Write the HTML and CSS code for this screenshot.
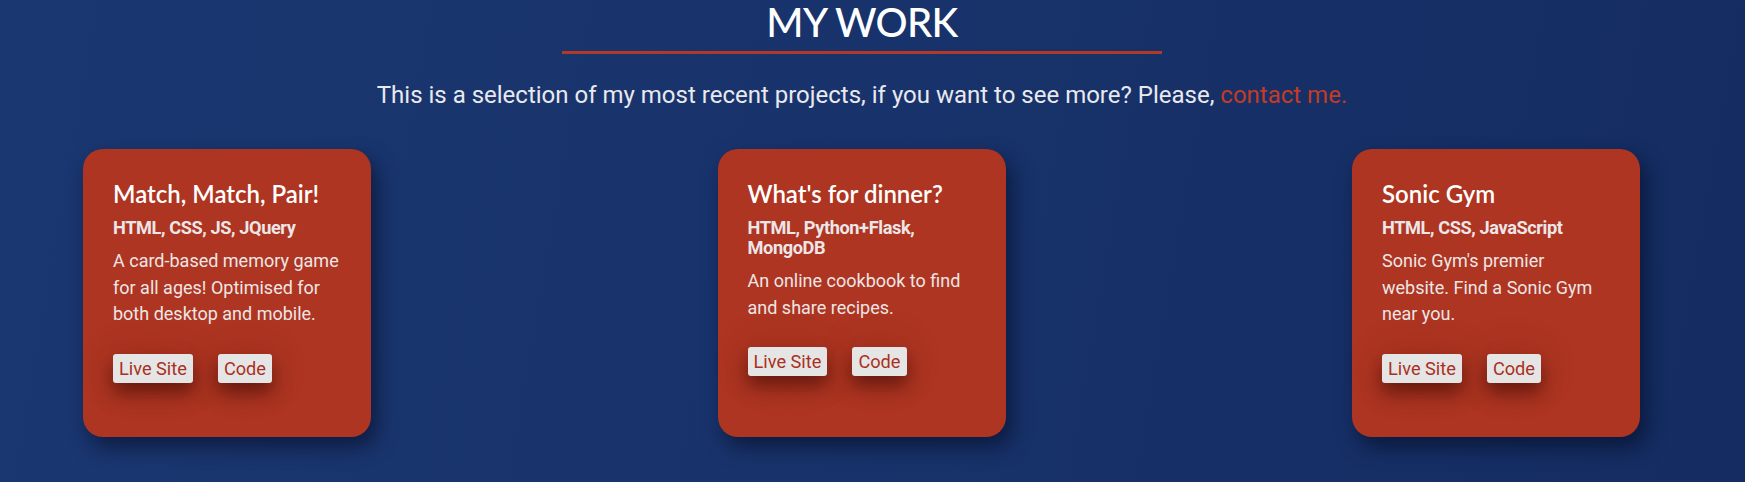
FILE: index.html
```html
<!DOCTYPE html>
<html lang="en">
<head>
<meta charset="utf-8">
<title>My Work</title>
<link rel="stylesheet" href="styles.css">
</head>
<body>
<section class="work">
  <div class="heading">
    <h2 class="heading-title">MY WORK</h2>
    <div class="heading-rule"></div>
  </div>
  <p class="intro">This is a selection of my most recent projects, if you want to see more? Please, <a class="intro-link" href="#">contact me.</a></p>
  <div class="cards">
    <article class="card">
      <h3 class="card-title">Match, Match, Pair!</h3>
      <p class="card-tech">HTML, CSS, JS, JQuery</p>
      <p class="card-desc">A card-based memory game for all ages! Optimised for both desktop and mobile.</p>
      <div class="card-actions">
        <a class="btn" href="#">Live Site</a>
        <a class="btn" href="#">Code</a>
      </div>
    </article>
    <article class="card">
      <h3 class="card-title">What's for dinner?</h3>
      <p class="card-tech">HTML, Python+Flask, MongoDB</p>
      <p class="card-desc">An online cookbook to find and share recipes.</p>
      <div class="card-actions">
        <a class="btn" href="#">Live Site</a>
        <a class="btn" href="#">Code</a>
      </div>
    </article>
    <article class="card">
      <h3 class="card-title">Sonic Gym</h3>
      <p class="card-tech">HTML, CSS, JavaScript</p>
      <p class="card-desc">Sonic Gym's premier website. Find a Sonic Gym near you.</p>
      <div class="card-actions">
        <a class="btn" href="#">Live Site</a>
        <a class="btn" href="#">Code</a>
      </div>
    </article>
  </div>
</section>
</body>
</html>
```

FILE: styles.css
```css
* { box-sizing: border-box; }

html, body {
  margin: 0;
  padding: 0;
  height: 100%;
}

body {
  background: linear-gradient(100deg, #1b3771 0%, #18336b 50%, #142c61 100%);
  font-family: Roboto, "Liberation Sans", sans-serif;
  color: #ecebf0;
  overflow: hidden;
}

.work {
  padding-right: 21px;
}

.heading {
  display: flex;
  flex-direction: column;
  align-items: center;
}

.heading-title {
  margin: 0;
  font-family: Lato, "Open Sans", sans-serif;
  font-weight: 500;
  font-size: 40px;
  line-height: 44px;
  letter-spacing: -0.6px;
  color: #ffffff;
}

.heading-rule {
  width: 600px;
  height: 3px;
  margin-top: 7px;
  background: #b13a26;
}

.intro {
  margin: 25px 0 0;
  text-align: center;
  font-size: 24px;
  line-height: 32px;
  color: #e9e9ef;
}

.intro-link {
  color: #c23b27;
  text-decoration: none;
}

.cards {
  display: flex;
  justify-content: space-between;
  padding: 0 84px 0 83px;
  margin-top: 38px;
}

.card {
  width: 288px;
  height: 288px;
  padding: 30px 30px;
  background: #ad3521;
  border-radius: 20px;
  box-shadow: 6px 10px 20px rgba(5, 12, 35, 0.6);
}

.card-title {
  margin: 0;
  font-family: Lato, "Open Sans", sans-serif;
  font-weight: 600;
  font-size: 24px;
  line-height: 29px;
  color: #ffffff;
}

.card-tech {
  margin: 10px 0 0;
  font-weight: 700;
  font-size: 18.2px;
  line-height: 20px;
  letter-spacing: -0.4px;
  color: #ece6e8;
}

.card-desc {
  margin: 10px 0 0;
  font-size: 18px;
  line-height: 26.7px;
  color: #eee6e6;
}

.card-actions {
  display: flex;
  gap: 25px;
  margin-top: 26px;
}

.btn {
  display: block;
  padding: 4px 6px;
  font-size: 18.2px;
  line-height: 21px;
  color: #a9301d;
  background: #e6e5e6;
  border-radius: 3px;
  text-decoration: none;
  box-shadow: 0 10px 18px rgba(60, 10, 5, 0.6), 0 0 45px rgba(80, 15, 5, 0.12);
}
```
